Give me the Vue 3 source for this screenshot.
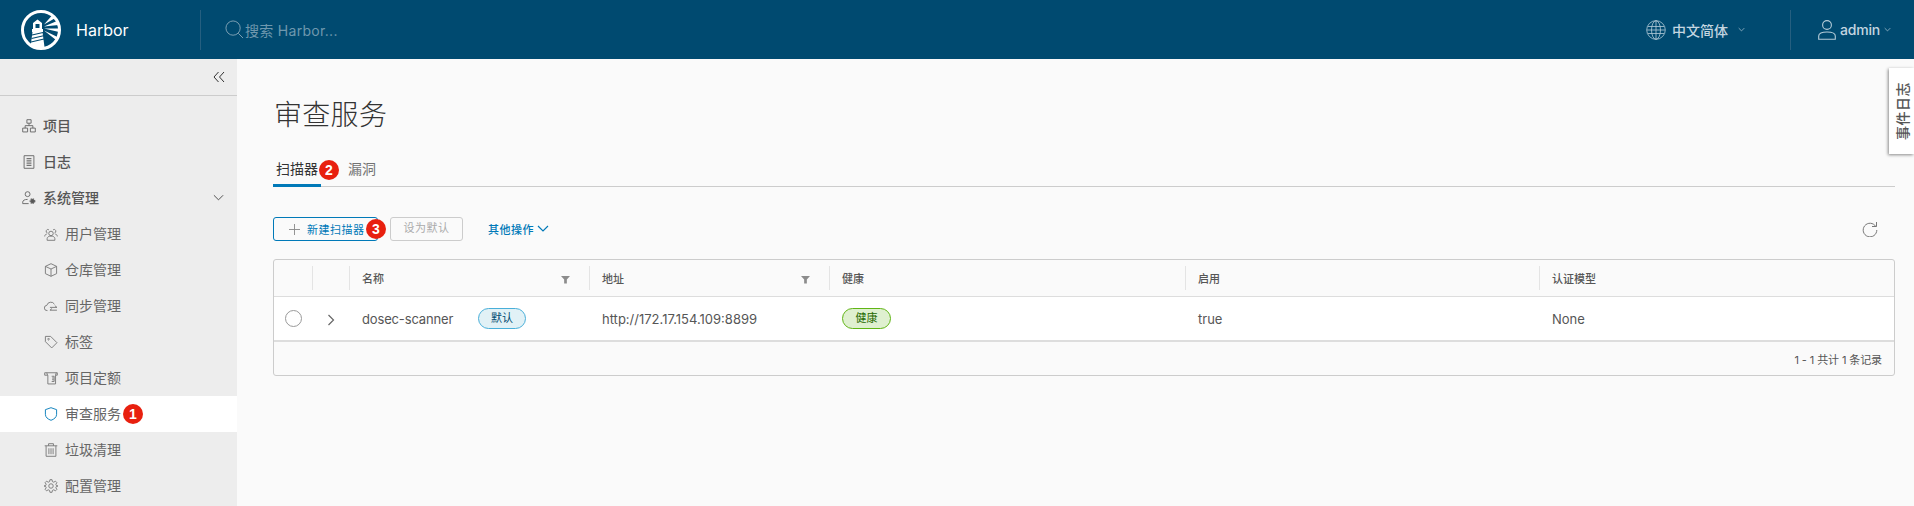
<script setup>
const top = [
  { key: 'proj', label: '项目' },
  { key: 'log', label: '日志' }
]
const sub = [
  { key: 'users', label: '用户管理' },
  { key: 'box', label: '仓库管理' },
  { key: 'sync', label: '同步管理' },
  { key: 'tag', label: '标签' },
  { key: 'quota', label: '项目定额' },
  { key: 'shield', label: '审查服务', active: true, badge: 1 },
  { key: 'trash', label: '垃圾清理' },
  { key: 'gear', label: '配置管理' }
]
const paths = {
  proj: 'M7 1h6v5h-6zM1 13h7v5.500h-7zM12 13h7v5.500h-7zM10 6v3.500M4.500 13V9.500h11V13',
  log: 'M3 1h14v18h-14zM6.500 5h7M6.500 7.500h7M6.500 10h7M6.500 12.500h7M6.500 15h7',
  users: 'M10 6a3.200 3.200 0 1 1 0 6.400a3.200 3.200 0 0 1 0-6.400zM4.500 19v-2.500c0-2 2-3.500 5.500-3.500s5.500 1.500 5.500 3.500V19zM5 8.500a2.500 2.500 0 1 1 2-4.500M15 8.500a2.500 2.500 0 1 0-2-4.500M1 13.500c0-1.800 1-3 3-3.500M19 13.500c0-1.800-1-3-3-3.500',
  box: 'M10 1l8 3.800v10.400l-8 3.800l-8-3.800v-10.400zM2 4.800l8 3.800l8-3.800M10 8.600v10.400',
  sync: 'M5 16.500h-.500a3.700 3.700 0 0 1-.500-7.400a6 6 0 0 1 11-1.600M8.500 12h10M15.500 9.500l3 2.500M18.500 16h-10M11.500 13.500l-3 2.500',
  tag: 'M2 2h7.500l9 9l-7.500 7.500l-9-9zM6.500 5a1 1 0 1 1-.010 0',
  quota: 'M1 2.500h18v3.500h-2.500v12.500h-11v-12.500h-4.500zM5 6l-1-3.500M16.500 6l1-3.500M11 7.500h3.500v7.500h-3.500M11.500 10h2.500M11.500 12.500h2.500',
  shield: 'M10 1l8 2.800v6.700c0 4.200-3.500 6.900-8 8.500c-4.500-1.600-8-4.300-8-8.500v-6.700z',
  trash: 'M1 4h18M6.500 4v-3h7V4M3 4v15h14V4M7 7.500v8.500M10 7.500v8.500M13 7.500v8.500',
  gear: 'M8.500 1h3l.500 2.700l2 .900l2.300-1.500l2.100 2.100l-1.500 2.300l.900 2l2.700.500v0l-2.700.500l-.900 2l1.500 2.300l-2.100 2.100l-2.300-1.500l-2 .900l-.500 2.700h-3l-.500-2.700l-2-.900l-2.300 1.500l-2.100-2.100l1.500-2.300l-.900-2l-2.700-.500v0l2.700-.500l.900-2l-1.500-2.300l2.100-2.100l2.300 1.500l2-.900zM10 6.800a3.200 3.200 0 1 1 0 6.400a3.200 3.200 0 0 1 0-6.400z'
}
const cols = ['', '', '名称', '地址', '健康', '启用', '认证模型']
</script>

<template>
  <div class="page">
    <header class="bar">
      <div class="brand">
        <svg class="logo" viewBox="0 0 40 40" aria-hidden="true">
          <circle cx="20" cy="20" r="18.500" fill="none" stroke="#fff" stroke-width="3" />
          <path d="M16.500 9.500l4.500 3.500v6h1v3h-.500l2 15h-14l2-15h-.500v-3h1v-6z" fill="#fff" />
          <path d="M14.500 14h4v4h-4z" fill="#004a70" />
          <path d="M11 25l11-2.500M10.500 28.500l12-2.800M10 32l13-3" stroke="#004a70" stroke-width="1.100" />
          <path d="M23 14.500l7.500-8.500l3 2.500zM23 16.500l13-5.500l1.500 4zM23 18.500h15v3.500zM23 20.500l13.500 6.500l-1.500 3z" fill="#fff" />
        </svg>
        <span class="brand-name">Harbor</span>
      </div>
      <div class="search">
        <svg class="search-ico" viewBox="0 0 20 20"><circle cx="8.500" cy="8.500" r="7.500" /><path d="M14 14l5 5" /></svg>
        <span>搜索 Harbor...</span>
      </div>
      <div class="lang">
        <svg class="globe" viewBox="0 0 20 20"><circle cx="10" cy="10" r="9.300" /><ellipse cx="10" cy="10" rx="4.500" ry="9.300" /><path d="M10 .7v18.600M1.800 6.500h16.400M1.800 13.500h16.400M1 10h18" /></svg>
        <span class="lang-text">中文简体</span>
        <svg class="caret lang-caret" viewBox="0 0 10 6"><path d="M1 1l4 4l4-4" /></svg>
      </div>
      <div class="user">
        <svg class="person" viewBox="0 0 18 20"><circle cx="9" cy="5" r="4.400" /><path d="M.7 19.300v-3.300c0-2.500 3-4 8.300-4s8.300 1.500 8.300 4v3.300z" /></svg>
        <span class="admin">admin</span>
        <svg class="caret" viewBox="0 0 10 6"><path d="M1 1l4 4l4-4" /></svg>
      </div>
    </header>

    <div class="body">
      <aside class="side">
        <div class="collapse">
          <svg viewBox="0 0 12 12"><path d="M5.500 1l-4.500 5l4.500 5M11 1l-4.500 5l4.500 5" /></svg>
        </div>
        <nav class="nav">
          <div v-for="t in top" :key="t.key" class="item strong">
            <svg class="ico" viewBox="0 0 20 20"><path :d="paths[t.key]" /></svg>
            <span>{{ t.label }}</span>
          </div>
          <div class="item strong">
            <svg class="ico" viewBox="0 0 20 20">
              <circle cx="8" cy="4.500" r="3.500" />
              <path d="M1 18v-2c0-2.500 2.500-4 7-4" />
              <path d="M1 18h8.500" />
              <circle cx="15" cy="14.500" r="2.900" fill="#565656" stroke-width="2.500" stroke-dasharray="1.500 1" />
            </svg>
            <span>系统管理</span>
            <svg class="chev" viewBox="0 0 12 8"><path d="M1 1l5 5l5-5" /></svg>
          </div>
          <div v-for="s in sub" :key="s.key" class="item subitem" :class="{ active: s.active }">
            <svg class="ico" viewBox="0 0 20 20"><path :d="paths[s.key]" /></svg>
            <span>{{ s.label }}</span>
            <b v-if="s.badge" class="badge">{{ s.badge }}</b>
          </div>
        </nav>
      </aside>

      <main class="main">
        <h1 class="title">审查服务</h1>
        <div class="tabs">
          <div class="tab current">扫描器</div>
          <b class="badge tab-badge">2</b>
          <div class="tab">漏洞</div>
        </div>
        <div class="tools">
          <div class="btn-new">
            <svg viewBox="0 0 12 12"><path d="M6 0v12M0 6h12" /></svg>
            <span>新建扫描器</span>
            <b class="badge new-badge">3</b>
          </div>
          <div class="btn-off">设为默认</div>
          <div class="more">
            <span>其他操作</span>
            <svg viewBox="0 0 12 8"><path d="M1 1l5 5l5-5" /></svg>
          </div>
          <svg class="refresh" viewBox="0 0 16 16"><path d="M13.800 5.500A6.800 6.800 0 1 0 14.800 9M14.500 1v4.500h-4.500" /></svg>
        </div>

        <section class="grid">
          <div class="row head">
            <div v-for="(c, i) in cols" :key="i" class="hcell">
              <span>{{ c }}</span>
              <svg v-if="i === 2 || i === 3" class="filter" viewBox="0 0 10 10"><path d="M0 1h10L6.500 5v4.500h-3V5z" /></svg>
            </div>
          </div>
          <div class="row data">
            <div class="dcell center"><i class="radio"></i></div>
            <div class="dcell center">
              <svg class="expand" viewBox="0 0 8 12"><path d="M1.500 1l5 5l-5 5" /></svg>
            </div>
            <div class="dcell name">
              <span class="scanner">dosec-scanner</span>
              <span class="pill blue">默认</span>
            </div>
            <div class="dcell">http://172.17.154.109:8899</div>
            <div class="dcell"><span class="pill green">健康</span></div>
            <div class="dcell">true</div>
            <div class="dcell">None</div>
          </div>
          <div class="foot">1 - 1 共计 1 条记录</div>
        </section>
      </main>
      <div class="event-tab"><span>事件日志</span></div>
    </div>
  </div>
</template>

<style>
html, body { margin: 0; padding: 0; background: #fafafa; overflow: hidden; }
</style>

<style scoped>
.page {
  width: 1914px; height: 506px; overflow: hidden; display: flex; flex-direction: column;
  font-family: Inter, "Noto Sans CJK SC", sans-serif; color: #565656;
}
.bar { height: 59px; flex: none; background: #004a70; display: flex; align-items: center; color: #fff; position: relative; }
.brand { width: 201px; height: 40px; box-sizing: border-box; padding-left: 21px; display: flex; align-items: center; border-right: 1px solid #255f80; }
.logo { width: 40px; height: 40px; flex: none; }
.brand-name { margin-left: 15px; font-size: 16px; }
.search { margin-left: 24px; display: flex; align-items: center; color: #6f98ae; font-size: 14px; letter-spacing: .3px; }
.search-ico { width: 19px; height: 19px; fill: none; stroke: #81a3b6; stroke-width: 1; margin-right: 1px; }
.lang { margin-left: auto; display: flex; align-items: center; color: #c4d6e0; font-size: 14px; font-weight: 500; }
.globe { width: 20px; height: 20px; fill: none; stroke: #b4ccd8; stroke-width: .8; margin-right: 6px; }
.caret { width: 7px; height: 5px; fill: none; stroke: #b4ccd8; stroke-width: 1; margin-left: 4px; }
.lang-caret { margin-left: 10px; margin-right: 45px; }
.user { width: 124px; height: 40px; box-sizing: border-box; padding-left: 27px; display: flex; align-items: center; border-left: 1px solid #255f80; color: #c4d6e0; font-size: 14px; font-weight: 500; }
.admin { letter-spacing: -.2px; }
.person { width: 18px; height: 20px; fill: none; stroke: #b4ccd8; stroke-width: 1.100; margin-right: 4px; }

.body { flex: 1; display: flex; min-height: 0; position: relative; }
.side { width: 237px; flex: none; background: #ededed; overflow: hidden; }
.collapse { height: 36px; border-bottom: 1px solid #ccc; display: flex; align-items: center; justify-content: flex-end; padding-right: 12px; }
.collapse svg { width: 12px; height: 12px; fill: none; stroke: #333; stroke-width: 1; }
.nav { padding-top: 12px; }
.item { height: 36px; display: flex; align-items: center; padding-left: 22px; font-size: 14px; position: relative; }
.item span { padding-bottom: 2px; }
.strong { font-weight: 500; }
.subitem { padding-left: 44px; color: #666; font-weight: 400; }
.ico { width: 14px; height: 14px; fill: none; stroke: #777; stroke-width: 1.300; margin-right: 7px; flex: none; }
.strong .ico { stroke: #666; }
.active { background: #fff; }
.active .ico { stroke: #0079b8; }
.chev { position: absolute; right: 13px; top: 14px; width: 11px; height: 8px; fill: none; stroke: #444; stroke-width: 1; }
.badge { width: 20px; height: 20px; border-radius: 50%; background: #e8200f; color: #fff; font: 700 14px/20px "Liberation Sans", sans-serif; text-align: center; flex: none; }
.subitem .badge { margin-left: 2px; }

.main { flex: 1; min-width: 0; background: #fafafa; box-sizing: border-box; padding: 0 19px 0 36px; }
.title { margin: 36px 0 0; padding-left: 1px; font-size: 28px; line-height: 40px; font-weight: 300; color: #333; letter-spacing: .3px; }
.tabs { margin-top: 25px; height: 26px; border-bottom: 1px solid #ccc; display: flex; align-items: flex-start; }
.tab { font-size: 14px; line-height: 18px; height: 24px; }
.tab.current { color: #333; width: 48px; box-sizing: border-box; padding-left: 3px; border-bottom: 3px solid #0079b8; height: 27px; }
.tab-badge { margin: 0 0 0 -2px; }
.tab-badge + .tab { margin-left: 9px; color: #737373; }
.tools { margin-top: 30px; height: 24px; display: flex; align-items: center; }
.btn-new { width: 105px; height: 24px; box-sizing: border-box; border: 1px solid #0079b8; border-radius: 3px; display: flex; align-items: center; padding-left: 15px; color: #0079b8; font-size: 11px; letter-spacing: .5px; position: relative; }
.btn-new svg { width: 11px; height: 11px; stroke: #8a8a8a; stroke-width: 1; margin-right: 7px; flex: none; }
.new-badge { position: absolute; right: -9px; top: 1px; letter-spacing: 0; }
.btn-off { margin-left: 12px; width: 73px; height: 24px; box-sizing: border-box; border: 1px solid #ccc; border-radius: 3px; text-align: center; line-height: 21px; font-size: 11px; letter-spacing: .5px; color: #aaa; }
.more { margin-left: 25px; display: flex; align-items: center; color: #0079b8; font-size: 11px; font-weight: 500; letter-spacing: .5px; }
.more svg { width: 12px; height: 8px; fill: none; stroke: #0079b8; stroke-width: 1.200; margin-left: 3px; }
.refresh { margin-left: auto; margin-right: 17px; width: 16px; height: 16px; fill: none; stroke: #777; stroke-width: 1; }

.grid { margin-top: 18px; border: 1px solid #ccc; border-radius: 3px; }
.row { display: grid; grid-template-columns: 38px 37px 240px 240px 356px 354px 1fr; }
.head { height: 36px; align-items: center; border-bottom: 1px solid #ddd; }
.hcell { height: 24px; box-sizing: border-box; padding: 0 19px 0 12px; display: flex; align-items: center; justify-content: space-between; font-size: 11px; font-weight: 500; color: #565656; }
.hcell + .hcell { border-left: 1px solid #e4e4e4; }
.filter { width: 9px; height: 9px; fill: #8c8c8c; margin-top: 3px; }
.data { height: 43px; background: #fff; align-items: center; border-bottom: 2px solid #ddd; font-size: 13px; color: #565656; }
.dcell { padding-left: 13px; display: flex; align-items: center; }
.center { padding-left: 0; justify-content: center; }
.scanner { width: 116px; flex: none; letter-spacing: -.15px; }
.radio { width: 15px; height: 15px; border: 1px solid #9a9a9a; border-radius: 50%; background: #fff; }
.expand { width: 8px; height: 12px; fill: none; stroke: #666; stroke-width: 1.200; margin-top: 2px; }
.pill { font-size: 11px; height: 21px; line-height: 18px; box-sizing: border-box; border-radius: 11px; text-align: center; width: 48px; }
.blue { background: #e1f1f6; border: 1px solid #49afd9; color: #004a70; }
.green { width: 49px; background: #dff0d0; border: 1px solid #60b515; color: #266900; }
.foot { height: 33px; display: flex; align-items: center; justify-content: flex-end; padding-right: 12px; font-size: 11px; letter-spacing: -.1px; color: #565656; }

.event-tab { position: absolute; right: 0; top: 9px; width: 25px; height: 86px; background: #fff; box-shadow: -1px 1px 3px rgba(0,0,0,.45); display: flex; align-items: center; justify-content: center; }
.event-tab span { writing-mode: vertical-rl; text-orientation: sideways; transform: rotate(180deg); font-size: 14px; font-weight: 500; color: #565656; letter-spacing: .5px; }
</style>
